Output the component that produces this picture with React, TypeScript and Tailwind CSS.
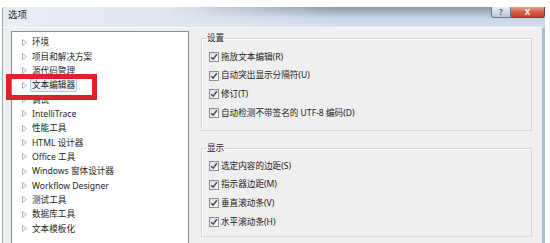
import React from "react";

const treeItems = [
  "环境",
  "项目和解决方案",
  "源代码管理",
  "文本编辑器",
  "调试",
  "IntelliTrace",
  "性能工具",
  "HTML 设计器",
  "Office 工具",
  "Windows 窗体设计器",
  "Workflow Designer",
  "测试工具",
  "数据库工具",
  "文本模板化",
];

const settings = ["拖放文本编辑(R)", "自动突出显示分隔符(U)", "修订(T)", "自动检测不带签名的 UTF-8 编码(D)"];
const display = ["选定内容的边距(S)", "指示器边距(M)", "垂直滚动条(V)", "水平滚动条(H)"];

const Arrow: React.FC = () => (
  <svg width="5" height="7" viewBox="0 0 5 7" className="shrink-0">
    <path d="M0.5 0.5 L4.5 3.5 L0.5 6.5 Z" fill="#ffffff" stroke="#a7a7a7" strokeWidth="0.9" />
  </svg>
);

const CheckBox: React.FC = () => (
  <span className="flex h-[10px] w-[10px] shrink-0 items-center justify-center border border-[#8f8f8f] bg-[linear-gradient(135deg,#dcdcdc,#ffffff)]">
    <svg width="8" height="8" viewBox="0 0 8 8">
      <path d="M1.2 4.2 L3.1 6.2 L6.9 1.3" fill="none" stroke="#3b4c72" strokeWidth="1.5" />
    </svg>
  </span>
);

const Group: React.FC<{ title: string; items: string[]; className: string }> = ({ title, items, className }) => (
  <fieldset className={`border border-[#d6d6d6] px-[5px] shadow-[inset_1px_1px_0_#ffffff] ${className}`}>
    <legend className="h-[12px] px-0 leading-[12px] text-[#1e1e1e]">{title}</legend>
    <div className="flex flex-col">
      {items.map((label) => (
        <div key={label} className="flex h-[18.6px] items-center gap-[2px] pl-[2px]">
          <CheckBox />
          <span className="whitespace-nowrap text-[#222]">{label}</span>
        </div>
      ))}
    </div>
  </fieldset>
);

const App: React.FC = () => {
  return (
    <div
      className="relative h-[243px] w-[550px] overflow-hidden bg-white pl-[2px] pr-[5px] pt-[7px] text-[8.6px]"
      style={{ fontFamily: '"Noto Sans", "Noto Sans CJK SC", sans-serif' }}
    >
      <div className="flex h-full flex-col">
        {/* title bar */}
        <div className="flex h-[20px] shrink-0 items-start justify-between rounded-t-[3px] border-l border-[#9aa9b8] bg-[linear-gradient(to_right,#e9eef3_0%,#e1e8ef_30%,rgba(233,238,243,0)_62%),linear-gradient(to_bottom,#8c99a8_0%,#a7b5c4_28%,#c6d6e6_55%,#d5e2ee_100%)] pl-[5px]">
          <span className="pt-[2px] text-[9.5px] leading-[12px] text-[#1e1e1e]">选项</span>
          <div className="flex">
            <div className="flex h-[11px] w-[20px] items-center justify-center rounded-bl-[3px] border border-t-0 border-[#6b7989] bg-[linear-gradient(to_bottom,#e6edf4,#b9c8d8)] text-[8px] font-bold leading-none text-[#5a6a7c]">
              ?
            </div>
            <div className="flex h-[11px] w-[34px] items-center justify-center rounded-br-[3px] border border-l-0 border-t-0 border-[#7c3b31] bg-[linear-gradient(to_bottom,#e9a493,#d0604a_50%,#c2412b)] text-[8px] font-bold leading-none text-white">
              X
            </div>
          </div>
        </div>

        {/* body */}
        <div className="flex flex-1 border-l border-r-[3px] border-l-[#9aa9b8] border-r-[#a9bfd6] border-t border-t-[#f8f8f8] bg-[#efeef0] pl-[8px] pr-[10px] pt-[3px]">
          <div className="w-[178px] shrink-0 border border-b-0 border-[#8a8f97] bg-white pt-[3px]">
            {treeItems.map((item) => (
              <div key={item} className="flex h-[14.35px] items-center pl-[10px]">
                <Arrow />
                <span
                  className={
                    item === "文本编辑器"
                      ? "ml-[3px] whitespace-nowrap rounded-[2px] border border-[#a9c9ea] bg-[#eaf3fc] px-[1px] leading-[12px] text-[#1e1e1e]"
                      : "ml-[5px] whitespace-nowrap leading-[12px] text-[#1e1e1e]"
                  }
                >
                  {item}
                </span>
              </div>
            ))}
          </div>

          <div className="ml-[12px] flex w-[331px] shrink-0 flex-col pt-[1px]">
            <Group title="设置" items={settings} className="h-[99px] pb-[8px] pt-[4px]" />
            <Group title="显示" items={display} className="mt-[11px] h-[95px] pb-[7px] pt-[3px]" />
          </div>
        </div>
      </div>

      {/* red highlight marker */}
      <div className="absolute left-[6px] top-[74px] h-[26px] w-[91px] border-[5px] border-[#dc2329]" />
    </div>
  );
};

export default App;
